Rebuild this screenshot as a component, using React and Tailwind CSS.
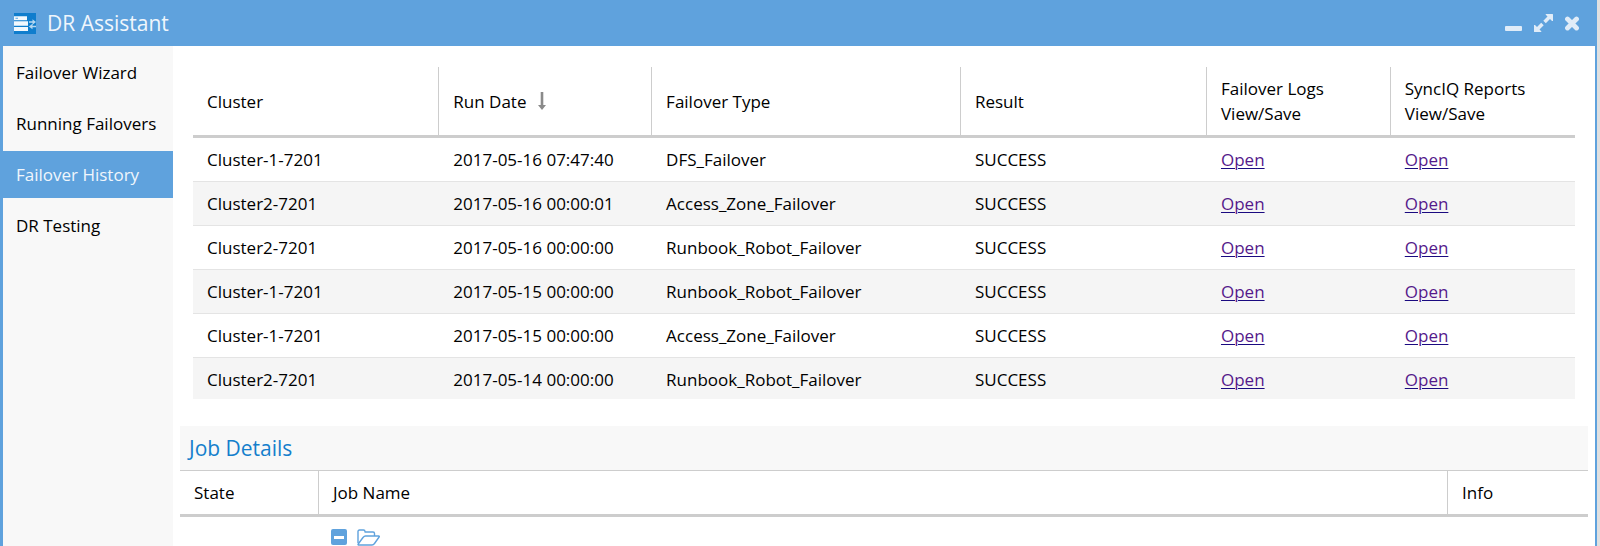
const failovers = [
  { cluster: 'Cluster-1-7201', date: '2017-05-16 07:47:40', type: 'DFS_Failover', result: 'SUCCESS' },
  { cluster: 'Cluster2-7201', date: '2017-05-16 00:00:01', type: 'Access_Zone_Failover', result: 'SUCCESS' },
  { cluster: 'Cluster2-7201', date: '2017-05-16 00:00:00', type: 'Runbook_Robot_Failover', result: 'SUCCESS' },
  { cluster: 'Cluster-1-7201', date: '2017-05-15 00:00:00', type: 'Runbook_Robot_Failover', result: 'SUCCESS' },
  { cluster: 'Cluster-1-7201', date: '2017-05-15 00:00:00', type: 'Access_Zone_Failover', result: 'SUCCESS' },
  { cluster: 'Cluster2-7201', date: '2017-05-14 00:00:00', type: 'Runbook_Robot_Failover', result: 'SUCCESS' },
];

const menu = ['Failover Wizard', 'Running Failovers', 'Failover History', 'DR Testing'];

function AppIcon() {
  return (
    <svg width="22" height="21" viewBox="0 0 22 21" aria-hidden="true">
      <rect width="22" height="21" fill="#0f7dcd" />
      <path d="M0 3.300h13v4H0zM0 8.300h14v4.400H0zM0 14h14v4H0z" fill="#f2f8fd" />
      <path d="M1.500 5.300h2.500" stroke="#6fb2e3" strokeWidth="1.200" />
      <path d="M15 8.300h3.500V6.300L22 9l-3.500 2.700V9.800H15zM22 12.800h-3.500v-2L14.800 13.600l3.700 2.700v-2H22z" fill="#b5d7f0" />
    </svg>
  );
}

function MinimizeIcon() {
  return (
    <svg width="17" height="20" viewBox="0 0 17 20" fill="#e0ecf8" aria-hidden="true">
      <rect y="13" width="17" height="5" rx="1" />
    </svg>
  );
}

function ExpandIcon() {
  return (
    <svg width="19" height="20" viewBox="0 0 19 20" fill="#e0ecf8" aria-hidden="true">
      <path d="M12 1h6.500q.5 0 .5.500V8h-1l-2-2-4.200 4.200-2.500-2.500L13.500 3.500l-2-2z" />
      <path d="M7 19H.5Q0 19 0 18.500V12h1l2 2 4.200-4.200 2.500 2.500L5.500 16.500l2 2z" />
    </svg>
  );
}

function CloseIcon() {
  return (
    <svg width="14" height="20" viewBox="0 0 14 20" aria-hidden="true">
      <path d="M2.500 6l9 9M11.500 6l-9 9" stroke="#e0ecf8" strokeWidth="4.800" strokeLinecap="round" />
    </svg>
  );
}

function SortArrow() {
  return (
    <svg width="8" height="18" viewBox="0 0 8 18" fill="#8a8a8a" aria-hidden="true">
      <path d="M2.700 0h2.600v13H8l-4 5-4-5h2.700z" />
    </svg>
  );
}

function FolderOpenIcon() {
  return (
    <svg width="23" height="17" viewBox="0 0 23 17" fill="none" stroke="#5fa2dd" strokeWidth="1.400" strokeLinejoin="round" aria-hidden="true">
      <path d="M1 14V2.500C1 1.500 1.500 1 2.500 1h4C7.500 1 8 1.500 8 2.500V3h8c1 0 1.500.5 1.500 1.500V7" />
      <path d="M1.200 15L6 8.500C6.800 7.500 7.500 7 8.500 7h13.200c.6 0 .8.500.4 1l-4.600 6.500c-.7 1-1.500 1.500-2.500 1.500H2c-.8 0-1.200-.4-.8-1z" />
    </svg>
  );
}

function HeaderCell({ children }) {
  return (
    <th className="border-b-[3px] border-l border-[#cdcdcd] px-[14px] text-left font-normal first:border-l-0">
      {children}
    </th>
  );
}

function OpenLink({ label }) {
  return (
    <a href="#open" aria-label={label} className="text-[#551a8b] underline decoration-[#1a0a80] decoration-1 underline-offset-2">
      Open
    </a>
  );
}

function HistoryTable() {
  return (
    <div className="mx-5 mt-[21px] h-[332px] overflow-hidden">
      <table className="w-full table-fixed border-separate border-spacing-0">
        <colgroup>
          <col className="w-[17.75%]" />
          <col className="w-[15.4%]" />
          <col className="w-[22.35%]" />
          <col className="w-[17.8%]" />
          <col className="w-[13.3%]" />
          <col />
        </colgroup>
        <thead>
          <tr className="h-[71px]">
            <HeaderCell>Cluster</HeaderCell>
            <HeaderCell>
              <span className="flex items-center gap-3">
                Run Date <SortArrow />
              </span>
            </HeaderCell>
            <HeaderCell>Failover Type</HeaderCell>
            <HeaderCell>Result</HeaderCell>
            <HeaderCell>Failover Logs<br />View/Save</HeaderCell>
            <HeaderCell>SyncIQ Reports<br />View/Save</HeaderCell>
          </tr>
        </thead>
        <tbody>
          {failovers.map((row, i) => (
            <tr key={i} className="h-11 even:bg-[#f5f5f5] [&>td]:border-b [&>td]:border-[#e4e4e4] [&>td]:px-[15px] [&>td:first-child]:px-[14px]">
              <td>{row.cluster}</td>
              <td>{row.date}</td>
              <td>{row.type}</td>
              <td>{row.result}</td>
              <td><OpenLink label="Open failover logs" /></td>
              <td><OpenLink label="Open SyncIQ reports" /></td>
            </tr>
          ))}
        </tbody>
      </table>
    </div>
  );
}

function JobDetails() {
  return (
    <section className="mx-[7px] mt-[27px]">
      <h2 className="border-b border-[#cdcdcd] bg-[#f8f8f8] px-[9px] text-[21px] leading-[44px] text-[#157fcc]">Job Details</h2>
      <table className="w-full table-fixed border-separate border-spacing-0">
        <colgroup>
          <col className="w-[138px]" />
          <col />
          <col className="w-[141px]" />
        </colgroup>
        <thead>
          <tr className="h-[46px]">
            <HeaderCell>State</HeaderCell>
            <HeaderCell>Job Name</HeaderCell>
            <HeaderCell>Info</HeaderCell>
          </tr>
        </thead>
        <tbody>
          <tr>
            <td />
            <td className="px-[13px] pt-3">
              <div className="flex items-start gap-[10px]">
                <button aria-label="Collapse" className="flex h-4 w-4 items-center justify-center rounded-[2px] bg-[#5fa2dd]">
                  <span className="h-[3px] w-[10px] bg-white" />
                </button>
                <FolderOpenIcon />
              </div>
            </td>
            <td />
          </tr>
        </tbody>
      </table>
    </section>
  );
}

export default function App() {
  return (
    <div className="h-screen overflow-hidden bg-[#e0e0e0] pr-[3px] font-['Open_Sans','Noto_Sans',sans-serif] text-[17px] leading-[25px] text-black">
      <div className="flex h-full flex-col border-r-2 border-l-[3px] border-[#5fa2dd] bg-white">
        <header className="flex h-[46px] shrink-0 items-center justify-between bg-[#5fa2dd] pr-4 pl-[11px]">
          <div className="flex items-center gap-[11px]">
            <AppIcon />
            <h1 className="text-[21px] text-[#f0f6fc]">DR Assistant</h1>
          </div>
          <div className="flex items-center gap-3">
            <button aria-label="Minimize"><MinimizeIcon /></button>
            <button aria-label="Maximize"><ExpandIcon /></button>
            <button aria-label="Close"><CloseIcon /></button>
          </div>
        </header>
        <div className="flex min-h-0 flex-1">
          <nav className="flex w-[170px] shrink-0 flex-col gap-1 bg-[#f8f8f8] pt-[3px]">
            {menu.map((item) => (
              <button
                key={item}
                className={`h-[47px] shrink-0 pl-[13px] text-left whitespace-nowrap ${item === 'Failover History' ? 'bg-[#5fa2dd] text-[#f0f6fc]' : ''}`}
              >
                {item}
              </button>
            ))}
          </nav>
          <main className="min-w-0 flex-1">
            <HistoryTable />
            <JobDetails />
          </main>
        </div>
      </div>
    </div>
  );
}
